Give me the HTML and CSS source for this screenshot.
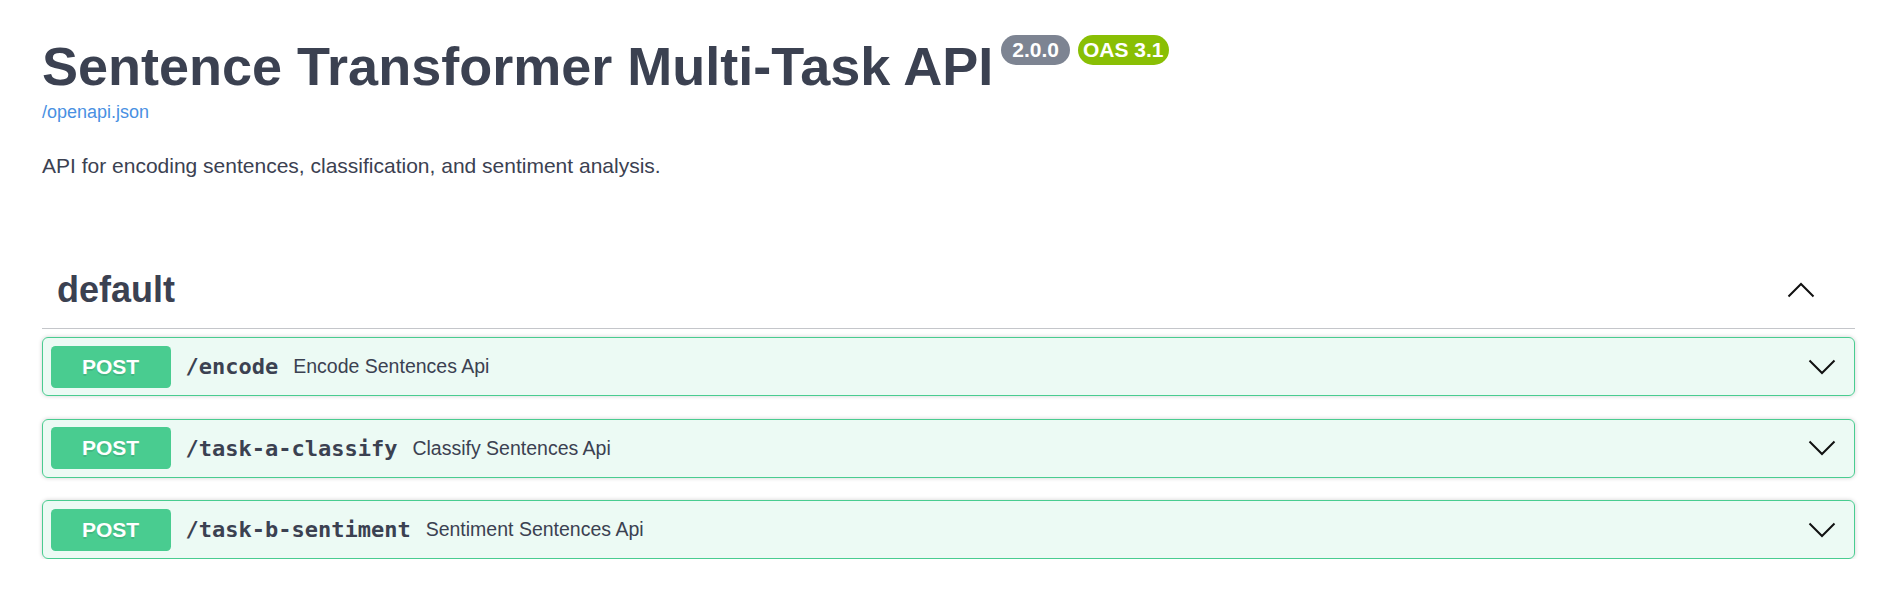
FILE: index.html
```html
<!DOCTYPE html>
<html lang="en">
<head>
<meta charset="utf-8">
<title>Sentence Transformer Multi-Task API</title>
<link rel="stylesheet" href="styles.css">
</head>
<body>
<div class="page">
  <div class="info">
    <div class="title-row">
      <h1 class="title">Sentence Transformer Multi-Task API</h1>
      <span class="badge badge-version">2.0.0</span>
      <span class="badge badge-oas">OAS 3.1</span>
    </div>
    <a class="spec-link" href="#">/openapi.json</a>
    <p class="desc">API for encoding sentences, classification, and sentiment analysis.</p>
  </div>

  <section class="tag-section">
    <div class="tag-header">
      <h3 class="tag-name">default</h3>
      <svg class="arrow" viewBox="0 0 28 16" aria-hidden="true"><polyline points="1.5,14.5 14,2 26.5,14.5"/></svg>
    </div>

    <div class="ops">
      <div class="opblock">
        <span class="method">POST</span>
        <span class="path">/encode</span>
        <span class="summary">Encode Sentences Api</span>
        <svg class="arrow arrow-down" viewBox="0 0 28 16" aria-hidden="true"><polyline points="1.5,1.5 14,14 26.5,1.5"/></svg>
      </div>
      <div class="opblock">
        <span class="method">POST</span>
        <span class="path">/task-a-classify</span>
        <span class="summary">Classify Sentences Api</span>
        <svg class="arrow arrow-down" viewBox="0 0 28 16" aria-hidden="true"><polyline points="1.5,1.5 14,14 26.5,1.5"/></svg>
      </div>
      <div class="opblock">
        <span class="method">POST</span>
        <span class="path">/task-b-sentiment</span>
        <span class="summary">Sentiment Sentences Api</span>
        <svg class="arrow arrow-down" viewBox="0 0 28 16" aria-hidden="true"><polyline points="1.5,1.5 14,14 26.5,1.5"/></svg>
      </div>
    </div>
  </section>
</div>
</body>
</html>
```

FILE: styles.css
```css
html, body {
  margin: 0;
  padding: 0;
  background: #ffffff;
}

body {
  font-family: "Liberation Sans", Arial, sans-serif;
  color: #3b4151;
}

.page {
  padding: 35px 22px 0 42px;
}

.title-row {
  display: flex;
  align-items: flex-start;
  gap: 8px;
}

.title {
  margin: 4px 0 0;
  font-size: 54px;
  line-height: 54px;
  font-weight: 700;
  color: #3b4151;
}

.badge {
  display: inline-block;
  padding: 3px 8px;
  border-radius: 57px;
  font-size: 21px;
  line-height: 24px;
  font-weight: 700;
  color: #ffffff;
}

.badge-version {
  padding: 3px 11px;
  background: #7d8492;
}

.badge-oas {
  padding: 3px 5px;
  background: #89bf04;
}

.spec-link {
  display: block;
  margin-top: 9px;
  font-size: 18px;
  line-height: 21px;
  color: #4990e2;
  text-decoration: none;
}

.desc {
  margin: 31px 0 0;
  font-size: 21px;
  line-height: 24px;
  color: #3b4151;
}

.tag-section {
  margin-top: 73px;
}

.tag-header {
  display: flex;
  align-items: center;
  justify-content: space-between;
  padding: 17px 40px 17px 15px;
  border-bottom: 1px solid rgba(59, 65, 81, 0.3);
  margin-bottom: 8px;
}

.tag-name {
  margin: 0;
  font-size: 36px;
  line-height: 43px;
  font-weight: 700;
  color: #3b4151;
}

.arrow {
  width: 28px;
  height: 16px;
  fill: none;
  stroke: #111111;
  stroke-width: 2;
  flex: none;
}

.ops {
  display: flex;
  flex-direction: column;
  gap: 22.5px;
}

.opblock {
  display: flex;
  align-items: center;
  padding: 7.5px 18px 7.5px 7.5px;
  border: 1px solid #49cc90;
  border-radius: 6px;
  background: rgba(73, 204, 144, 0.1);
  box-shadow: 0 0 4.5px rgba(0, 0, 0, 0.19);
}

.method {
  min-width: 120px;
  padding: 9px 0;
  border-radius: 4.5px;
  background: #49cc90;
  color: #ffffff;
  font-size: 21px;
  line-height: 24px;
  font-weight: 700;
  text-align: center;
  text-shadow: 0 1.5px 0 rgba(0, 0, 0, 0.1);
}

.path {
  padding: 0 15px;
  font-family: "DejaVu Sans Mono", "Liberation Mono", monospace;
  font-size: 22px;
  font-weight: 700;
  color: #3b4151;
}

.summary {
  flex: 1;
  font-size: 19.5px;
  color: #3b4151;
}
```
